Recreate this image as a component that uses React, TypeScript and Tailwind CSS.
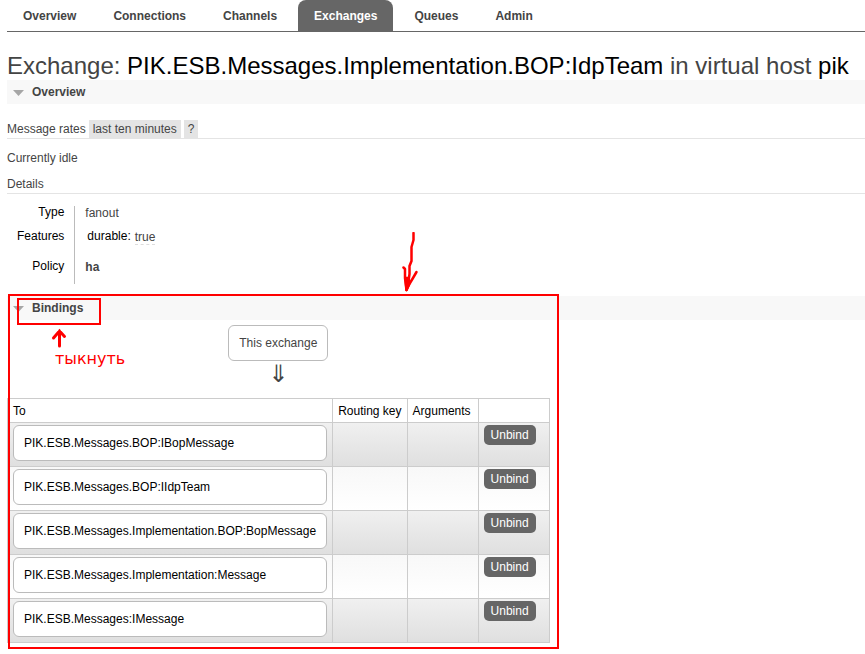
import React from "react";

const tabs = ["Overview", "Connections", "Channels", "Exchanges", "Queues", "Admin"];

const bindings = [
  "PIK.ESB.Messages.BOP:IBopMessage",
  "PIK.ESB.Messages.BOP:IIdpTeam",
  "PIK.ESB.Messages.Implementation.BOP:BopMessage",
  "PIK.ESB.Messages.Implementation:Message",
  "PIK.ESB.Messages:IMessage",
];

function SectionBar({ title }: { title: string }) {
  return (
    <h2 className="bg-[#f8f8f8] font-bold">
      <button type="button" aria-expanded="true" className="flex h-6 w-full items-center gap-2 pl-1.5 text-left">
        <svg width="11" height="6" viewBox="0 0 11 6" className="mt-0.5" aria-hidden="true">
          <path d="M0 0H11L5.5 6Z" fill="#a6a6a6" />
        </svg>
        {title}
      </button>
    </h2>
  );
}

function Tabs() {
  return (
    <nav className="border-b border-[#666]">
      <ul className="flex gap-[5px]">
        {tabs.map((tab) => (
          <li key={tab}>
            <a
              href="#"
              className={
                tab === "Exchanges"
                  ? "block h-[31px] rounded-t-lg bg-[#666] px-4 font-bold leading-8 text-white"
                  : "block h-[31px] px-4 font-bold leading-8"
              }
            >
              {tab}
            </a>
          </li>
        ))}
      </ul>
    </nav>
  );
}

function Details() {
  return (
    <table className="mt-3 text-left">
      <tbody className="align-top">
        <tr className="h-6">
          <th scope="row" className="border-r border-[#bbb] pr-2.5 pl-2.5 text-right leading-3 font-normal text-black">Type</th>
          <td className="pl-2.5 leading-[14px]">fanout</td>
        </tr>
        <tr className="h-[30px]">
          <th scope="row" className="border-r border-[#bbb] pr-2.5 pl-2.5 text-right leading-3 font-normal text-black">Features</th>
          <td className="pl-3">
            <div className="flex gap-1">
              <span className="leading-3 text-black">durable:</span>
              <abbr title="true" className="border-b border-dashed border-[#ddd] leading-[14px] no-underline">true</abbr>
            </div>
          </td>
        </tr>
        <tr className="h-6">
          <th scope="row" className="border-r border-[#bbb] pr-2.5 pl-2.5 text-right leading-3 font-normal text-black">Policy</th>
          <td className="pl-2.5 leading-[14px]">
            <a href="#" className="font-bold">ha</a>
          </td>
        </tr>
      </tbody>
    </table>
  );
}

function BindingsTable() {
  return (
    <table className="border-collapse border border-[#ccc] text-left text-black">
      <thead>
        <tr className="h-6">
          <th className="border border-[#ccc] px-[5px] font-normal">To</th>
          <th className="border border-[#ccc] px-[5px] font-normal">Routing key</th>
          <th className="border border-[#ccc] pr-[7px] pl-[5px] font-normal">Arguments</th>
          <th className="border border-[#ccc] px-[5px] font-normal" />
        </tr>
      </thead>
      <tbody className="align-top">
        {bindings.map((name, i) => (
          <tr
            key={name}
            className={
              i % 2 === 0
                ? "h-11 bg-linear-to-b from-[#f0f0f0] to-[#dfdfdf]"
                : "h-11 bg-linear-to-b from-[#f8f8f8] to-white"
            }
          >
            <td className="border border-[#ccc] px-[5px] pt-0.5">
              <a href="#" className="block rounded-md border border-[#bbb] bg-white px-2.5 leading-[34px]">{name}</a>
            </td>
            <td className="border border-[#ccc]" />
            <td className="border border-[#ccc]" />
            <td className="border border-[#ccc] pt-0.5 pr-[13px] pl-[5px]">
              <button type="button" className="block rounded-[5px] bg-[#666] px-[7px] leading-5 text-white">Unbind</button>
            </td>
          </tr>
        ))}
      </tbody>
    </table>
  );
}

function Annotations() {
  return (
    <div className="pointer-events-none absolute inset-0 text-[#f00]">
      <div className="absolute -top-0.5 left-px h-[355px] w-[551px] border-2 border-[#f00]" />
      <div className="absolute top-0.5 left-2.5 h-[27px] w-[84px] border-2 border-[#f00]" />
      <svg className="absolute top-8 left-11" width="16" height="20" viewBox="0 0 16 20" fill="none" stroke="currentColor" strokeWidth="3" strokeLinecap="round" aria-hidden="true">
        <path d="M8.500 18V3M2.500 10L8.500 3L13.500 8.500" />
      </svg>
      <p className="absolute top-[51px] left-12 font-['DejaVu_Sans',sans-serif] text-[16px] leading-6">тыкнуть</p>
      <svg className="absolute -top-16 left-[393px]" width="20" height="62" viewBox="400 232 20 62" fill="none" stroke="currentColor" strokeWidth="2.5" strokeLinecap="round" strokeLinejoin="round" aria-hidden="true">
        <path d="M413.500 233V240L411.500 247V261L409.500 266V274L408.500 281L406.500 290L405 278V269L403.500 267.500" />
        <path d="M406.500 290L410 283L413 278L416.500 272" />
        <path d="M405.500 278H408.500L409.500 283L406.500 290Z" fill="currentColor" />
      </svg>
    </div>
  );
}

export default function App() {
  return (
    <main className="pb-[11px] pl-[7px] font-['Liberation_Sans',Arial,sans-serif] text-xs text-[#444]">
      <Tabs />
      <h1 className="mt-5 text-2xl leading-7">
        Exchange: <span className="text-black">PIK.ESB.Messages.Implementation.BOP:IdpTeam</span> in virtual host{" "}
        <span className="text-black">pik</span>
      </h1>
      <section>
        <SectionBar title="Overview" />
        <h3 className="mt-4 flex gap-[3px] border-b border-[#e4e4e4] leading-[18px]">
          Message rates
          <button type="button" className="bg-[#e4e4e4] px-1">last ten minutes</button>
          <button type="button" aria-label="Help" className="bg-[#e4e4e4] px-1">?</button>
        </h3>
        <p className="mt-2.5 leading-[18px]">Currently idle</p>
        <h3 className="mt-2 border-b border-[#e4e4e4] leading-[18px]">Details</h3>
        <Details />
      </section>
      <section className="relative mt-3">
        <SectionBar title="Bindings" />
        <div className="mt-[5px] flex w-fit flex-col items-center">
          <div className="rounded-md border border-[#bbb] px-2.5 leading-[34px]">This exchange</div>
          <div className="h-[37px] font-['DejaVu_Sans',sans-serif] text-2xl leading-[26px]">⇓</div>
          <BindingsTable />
        </div>
        <Annotations />
      </section>
    </main>
  );
}
